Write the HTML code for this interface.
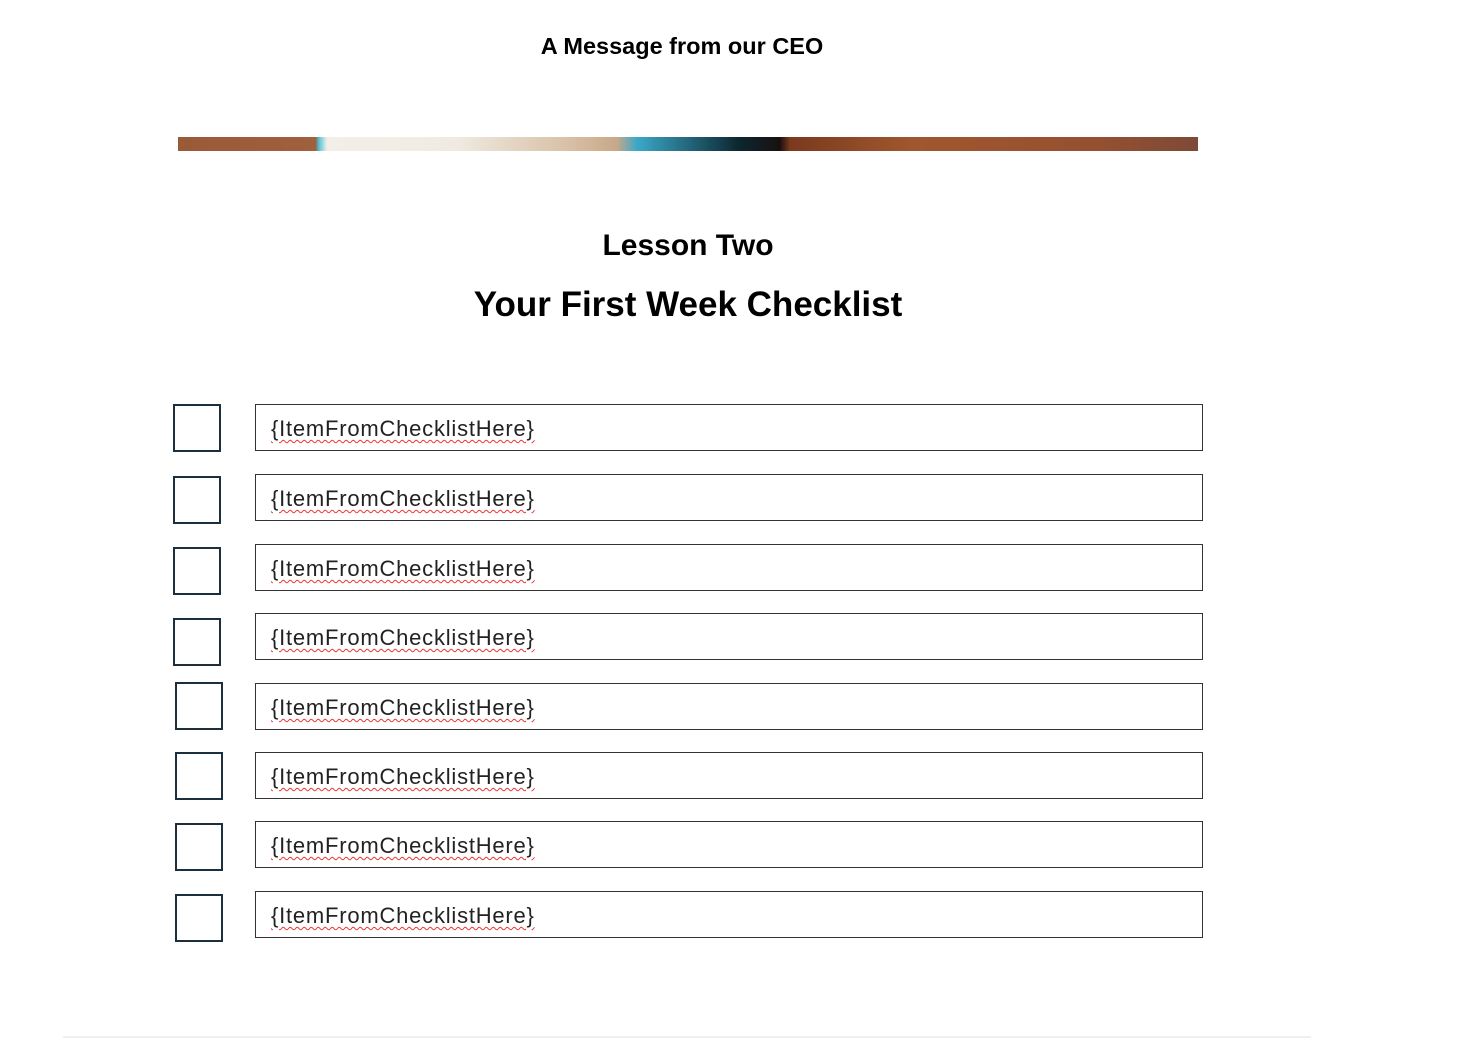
<!DOCTYPE html>
<html><head><meta charset="utf-8"><style>
body{margin:0;width:1483px;height:1060px;background:#fff;font-family:"Liberation Sans",Arial,sans-serif;position:relative;overflow:hidden;color:#000}
.a{position:absolute}
.t{font-weight:bold;text-align:center;white-space:nowrap}
.cb{position:absolute;width:44px;height:44px;border:2px solid #1b2f3f}
.tb{position:absolute;left:255px;width:946px;height:45px;border:1px solid #333}
.tb span{position:absolute;left:15px;top:11px;font-size:22px;letter-spacing:0.78px;color:#222;text-decoration:underline wavy #e33;text-decoration-thickness:1px;text-underline-offset:3px}
</style></head><body>
<div class="a t" style="left:482px;width:400px;top:33px;font-size:23.5px">A Message from our CEO</div>
<div class="a" style="left:178px;top:137px;width:1020px;height:14px;background:linear-gradient(90deg,#9a5a38 0%,#a0603d 13.5%,#4ec3d8 13.8%,#f3efe8 14.6%,#f0ebe2 27%,#d8c2a8 38%,#c9a888 43%,#3aa8c8 45%,#0d2630 55%,#1a1010 59%,#7a3a1e 60%,#a0572e 72%,#955030 90%,#7d4a38 100%)"></div>
<div class="a t" style="left:488px;width:400px;top:229px;font-size:30px">Lesson Two</div>
<div class="a t" style="left:388px;width:600px;top:285px;font-size:35px">Your First Week Checklist</div>

<div class="cb" style="left:173px;top:404px"></div>
<div class="cb" style="left:173px;top:476px"></div>
<div class="cb" style="left:173px;top:547px"></div>
<div class="cb" style="left:173px;top:618px"></div>
<div class="cb" style="left:175px;top:682px"></div>
<div class="cb" style="left:175px;top:752px"></div>
<div class="cb" style="left:175px;top:823px"></div>
<div class="cb" style="left:175px;top:894px"></div>

<div class="tb" style="top:404px"><span>{ItemFromChecklistHere}</span></div>
<div class="tb" style="top:474px"><span>{ItemFromChecklistHere}</span></div>
<div class="tb" style="top:544px"><span>{ItemFromChecklistHere}</span></div>
<div class="tb" style="top:613px"><span>{ItemFromChecklistHere}</span></div>
<div class="tb" style="top:683px"><span>{ItemFromChecklistHere}</span></div>
<div class="tb" style="top:752px"><span>{ItemFromChecklistHere}</span></div>
<div class="tb" style="top:821px"><span>{ItemFromChecklistHere}</span></div>
<div class="tb" style="top:891px"><span>{ItemFromChecklistHere}</span></div>

<div class="a" style="left:63px;top:1036px;width:1248px;height:2px;background:#efefef"></div>
</body></html>
